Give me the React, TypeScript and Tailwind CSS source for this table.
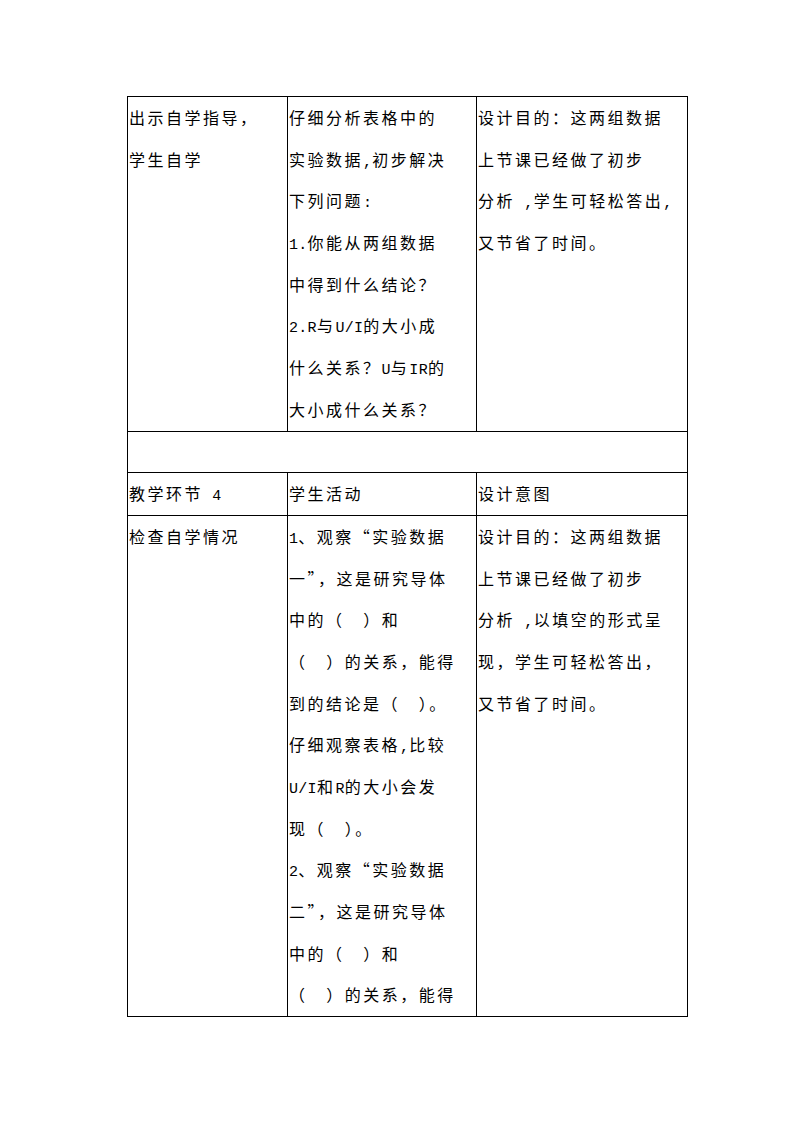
import React from "react"

// cell text is given line by line, as the page breaks it
const rows: { lines: string[][]; empty?: boolean }[] = [
  {
    lines: [
      ["出示自学指导，", "学生自学"],
      [
        "仔细分析表格中的",
        "实验数据,初步解决",
        "下列问题:",
        "1.你能从两组数据",
        "中得到什么结论？",
        "2.R与U/I的大小成",
        "什么关系？U与IR的",
        "大小成什么关系？",
      ],
      ["设计目的：这两组数据", "上节课已经做了初步", "分析 ,学生可轻松答出,", "又节省了时间。"],
    ],
  },
  { lines: [], empty: true },
  {
    lines: [["教学环节 4"], ["学生活动"], ["设计意图"]],
  },
  {
    lines: [
      ["检查自学情况"],
      [
        "1、观察“实验数据",
        "一”，这是研究导体",
        "中的（  ）和",
        "（  ）的关系，能得",
        "到的结论是（  ）。",
        "仔细观察表格,比较",
        "U/I和R的大小会发",
        "现（  ）。",
        "2、观察“实验数据",
        "二”，这是研究导体",
        "中的（  ）和",
        "（  ）的关系，能得",
      ],
      [
        "设计目的：这两组数据",
        "上节课已经做了初步",
        "分析 ,以填空的形式呈",
        "现，学生可轻松答出，",
        "又节省了时间。",
      ],
    ],
  },
]

// latin runs are half width in the source font
function Line({ text }: { text: string }) {
  const parts = text.split(/([\x20-\x7e]+)/).filter((p) => p !== "")
  return (
    <div className="h-[41.7px] whitespace-pre">
      {parts.map((p, i) =>
        /^[\x20-\x7e]+$/.test(p) ? (
          <span key={i} className="font-['Liberation_Mono',monospace] text-[15px] leading-none tracking-[0.3px]">
            {p}
          </span>
        ) : (
          <span key={i} className="leading-none">
            {p}
          </span>
        )
      )}
    </div>
  )
}

export default function App() {
  return (
    <div className="min-h-[1123px] w-[794px] bg-white pl-[127px] pt-[96px] text-black font-['Noto_Sans_CJK_SC',sans-serif]">
      <table className="w-[560px] table-fixed border-collapse text-[16px] leading-[41.7px] tracking-[2.5px]">
        <colgroup>
          <col className="w-[160px]" />
          <col className="w-[189px]" />
          <col className="w-[211px]" />
        </colgroup>
        <tbody>
          {rows.map((row, r) =>
            row.empty ? (
              <tr key={r}>
                <td colSpan={3} className="h-[41.7px] border border-black p-0" />
              </tr>
            ) : (
              <tr key={r}>
                {row.lines.map((cell, c) => (
                  <td key={c} className="border border-black p-0 pl-[1px] align-top">
                    {cell.map((l, i) => (
                      <Line key={i} text={l} />
                    ))}
                  </td>
                ))}
              </tr>
            )
          )}
        </tbody>
      </table>
    </div>
  )
}
